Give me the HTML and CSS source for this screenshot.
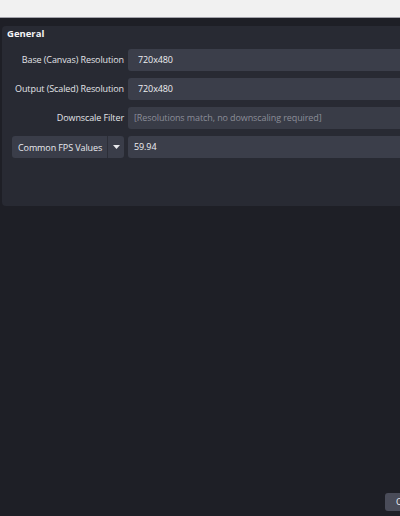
FILE: index.html
```html
<!DOCTYPE html>
<html>
<head>
<meta charset="utf-8">
<link rel="stylesheet" href="styles.css">
</head>
<body>
<div class="titlebar"></div>
<div class="main">
  <div class="group">
    <div class="group-title">General</div>
    <div class="form">
      <div class="label">Base (Canvas) Resolution</div>
      <div class="field editable">720x480</div>
      <div class="label">Output (Scaled) Resolution</div>
      <div class="field editable">720x480</div>
      <div class="label">Downscale Filter</div>
      <div class="field disabled">[Resolutions match, no downscaling required]</div>
      <div class="combo">
        <span class="combo-text">Common FPS Values</span>
        <span class="combo-arrow"><svg width="7" height="4" viewBox="0 0 7 4"><path d="M0 0H7L3.5 4Z" fill="#e8e8ec"/></svg></span>
      </div>
      <div class="field plain">59.94</div>
    </div>
  </div>
  <div class="buttons">
    <div class="btn">OK</div>
  </div>
</div>
</body>
</html>
```
FILE: styles.css
```css
html, body {
  margin: 0;
  padding: 0;
  width: 400px;
  height: 516px;
  overflow: hidden;
  background: #1e1f26;
  font-family: "Open Sans", "Liberation Sans", sans-serif;
  font-size: 9px;
  letter-spacing: -0.1px;
  color: #e4e5ea;
}
.titlebar {
  height: 17px;
  background: #f1f1f1;
  border-bottom: 1px solid #a3a3ab;
}
.main {
  height: 498px;
  display: flex;
  flex-direction: column;
  width: 640px;
}
.group {
  margin: 8px 0 0 2px;
  height: 180px;
  background: #282a33;
  border-radius: 4px;
  box-sizing: border-box;
}
.group-title {
  height: 16px;
  line-height: 16px;
  padding-left: 5px;
  font-weight: bold;
  color: #f4f4f6;
  font-size: 9.5px;
  letter-spacing: 0;
}
.form {
  margin-top: 7px;
  display: grid;
  grid-template-columns: 122px 500px;
  column-gap: 4px;
  row-gap: 7px;
}
.label {
  text-align: right;
  line-height: 22px;
  height: 22px;
  color: #e2e3e8;
}
.field {
  height: 22px;
  line-height: 22px;
  background: #3b3e4a;
  border-radius: 3px 0 0 3px;
  padding-left: 6px;
  box-sizing: border-box;
  color: #eeeef2;
}
.field.editable {
  padding-left: 10px;
}
.field.disabled {
  color: #8b8d98;
  background: #393c47;
}
.combo {
  margin-left: 10px;
  height: 22px;
  background: #3a3d49;
  border-radius: 3px;
  display: flex;
  align-items: center;
}
.combo-text {
  flex: 1;
  padding-left: 6px;
  color: #e8e9ee;
}
.combo-arrow {
  width: 16px;
  height: 22px;
  border-left: 1px solid #2c2e37;
  display: flex;
  align-items: center;
  justify-content: center;
}
.buttons {
  margin-top: auto;
  margin-bottom: 5px;
  display: flex;
  padding-left: 385px;
}
.btn {
  height: 18px;
  line-height: 18px;
  width: 60px;
  padding-left: 11px;
  background: #4a4c59;
  border-radius: 3px;
  color: #f0f0f4;
}
```
